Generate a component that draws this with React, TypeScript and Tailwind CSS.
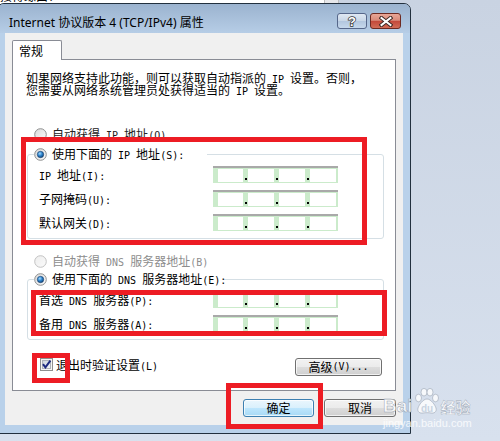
import React from "react";

function L({ children }: { children: React.ReactNode }) {
  return <span className="text-[10px] leading-[0] [font-family:'DejaVu_Sans_Mono',monospace]">{children}</span>;
}

function Radio({ checked = false, disabled = false, id }: { checked?: boolean; disabled?: boolean; id: string }) {
  return (
    <svg width="13" height="13" viewBox="0 0 13 13" className="shrink-0">
      <defs>
        <linearGradient id={`${id}f`} x1="0" y1="0" x2="1" y2="1">
          <stop offset="0" stopColor={disabled ? "#ededed" : "#d9d9d9"} />
          <stop offset="1" stopColor={disabled ? "#fbfbfb" : "#fcfcfc"} />
        </linearGradient>
        <radialGradient id={`${id}d`} cx="0.4" cy="0.35" r="0.75">
          <stop offset="0" stopColor="#a8dcff" />
          <stop offset="0.45" stopColor="#2f86cf" />
          <stop offset="1" stopColor="#0a3566" />
        </radialGradient>
      </defs>
      <circle cx="6.5" cy="6.5" r="5.8" fill={`url(#${id}f)`} stroke={disabled ? "#c2c2c2" : "#8e8f8f"} strokeWidth="1" />
      {checked && <circle cx="6.5" cy="6.5" r="3.2" fill={`url(#${id}d)`} stroke="#1b3f6b" strokeWidth="0.6" />}
    </svg>
  );
}

function Checkbox() {
  return (
    <svg width="13" height="13" viewBox="0 0 13 13" className="shrink-0">
      <defs>
        <linearGradient id="cbg" x1="0" y1="0" x2="1" y2="1">
          <stop offset="0" stopColor="#cbd3dc" />
          <stop offset="1" stopColor="#f4f6f8" />
        </linearGradient>
      </defs>
      <rect x="0.5" y="0.5" width="12" height="12" fill="#f5f5f5" stroke="#8e8f8f" />
      <rect x="2.5" y="2.5" width="8" height="8" fill="url(#cbg)" stroke="#aeb3b9" />
      <path d="M3 6.2 L5.4 9.4 L10.4 2.6" stroke="#1d2a80" strokeWidth="2" fill="none" />
    </svg>
  );
}

function IPField() {
  const seg = [25, 26, 26, 26];
  return (
    <div className="flex h-[17px] w-[125px] border-t-2 border-t-[#a9a9a9] bg-[#cbebcb] pb-px pl-[5px] pr-[2px] pt-px">
      {seg.map((w, i) => (
        <React.Fragment key={i}>
          {i > 0 && (
            <div className="flex w-[5px] items-end justify-center pb-[2px]">
              <div className="h-[2px] w-[2px] bg-black" />
            </div>
          )}
          <div className="bg-white" style={{ width: w }} />
        </React.Fragment>
      ))}
    </div>
  );
}

function Row({ label }: { label: React.ReactNode }) {
  return (
    <div className="flex h-[17px] items-center">
      <div className="w-[185px] whitespace-nowrap pl-[11px] text-[12px] leading-[12px]">{label}</div>
      <IPField />
    </div>
  );
}

const btn =
  "flex h-[18px] items-center justify-center rounded-[3px] border text-[12px] leading-[12px] text-black shadow-[inset_0_0_0_1px_rgba(255,255,255,0.7)]";

export default function App() {
  return (
    <div className="relative h-[441px] w-[500px] overflow-hidden bg-[linear-gradient(#c9d3e2,#d8e1ee)] text-black [font-family:'Noto_Sans_CJK_SC',sans-serif]">
      {/* background window behind */}
      <div className="absolute left-0 top-0 h-[4px] w-[324px] overflow-hidden bg-white">
        <div className="absolute left-0 top-[-10px] whitespace-nowrap text-[12px] leading-[12px]">接得缘由：</div>
      </div>
      <div className="absolute left-[324px] top-0 h-[4px] w-[15px] border-l border-r border-[#bdbdbd] bg-[#e6e7ea]" />

      {/* dialog window */}
      <div className="absolute left-[-3px] top-[3px] flex h-[431px] w-[414px] flex-col rounded-t-[7px] border border-[#22303e] bg-[#b9d1ea]">
        <div className="flex h-[29px] shrink-0 items-start justify-between rounded-t-[6px] bg-[linear-gradient(#9bb3cf,#b6cde6)]">
          <div className="ml-[11px] mt-[10px] h-[17px] whitespace-nowrap text-[12px] leading-[17px] [font-family:'Noto_Sans','Noto_Sans_CJK_SC',sans-serif]">
            Internet 协议版本 4 (TCP/IPv4) 属性
          </div>
          <div className="mr-[9px] mt-[9px] flex gap-[3px]">
            <div className="flex h-[16px] w-[30px] items-center justify-center rounded-[3px] border border-[#56678a] bg-[linear-gradient(#dfe8f3,#c8d6e7_50%,#b2c6de_50%,#c6d8ec)]">
              <svg width="10" height="13" viewBox="0 0 10 13">
                <text x="5" y="11" textAnchor="middle" fontSize="13" fontWeight="bold" fill="white" stroke="#333" strokeWidth="1.5" paintOrder="stroke" fontFamily="Liberation Sans">?</text>
              </svg>
            </div>
            <div className="flex h-[16px] w-[31px] items-center justify-center rounded-[3px] border border-[#6d2a22] bg-[linear-gradient(#e9a797,#d98b7b_45%,#c4493a_52%,#d16c57)]">
              <svg width="14" height="11" viewBox="0 0 14 11">
                <path d="M2.5 2 L11.5 9 M11.5 2 L2.5 9" stroke="#3a2622" strokeWidth="4" strokeLinecap="square" />
                <path d="M2.5 2 L11.5 9 M11.5 2 L2.5 9" stroke="white" strokeWidth="2" strokeLinecap="square" />
              </svg>
            </div>
          </div>
        </div>

        <div className="mx-[7px] mb-[8px] flex flex-1 flex-col bg-[#f0f0f0] pl-[7px] pt-[7px]">
          <div className="relative z-10 -mb-px flex h-[20px] w-[50px] items-center rounded-t-[2px] border border-b-0 border-[#898c95] bg-white pl-[6px] text-[12px] leading-[12px]">
            常规
          </div>
          <div className="flex h-[332px] w-[384px] shrink-0 flex-col border border-[#898c95] bg-white">
            <div className="ml-[13px] mt-[12px] flex flex-col whitespace-nowrap text-[12px] leading-[12px]">
              <div className="h-[12px]">
                如果网络支持此功能，则可以获取自动指派的<L> IP </L>设置。否则，
              </div>
              <div className="h-[12px]">
                您需要从网络系统管理员处获得适当的<L> IP </L>设置。
              </div>
            </div>

            <div className="ml-[21px] mt-[30px] flex h-[16px] items-center gap-[5px] text-[12px] leading-[12px]">
              <Radio id="ra" />
              <span className="text-[#222]">自动获得<L> IP </L>地址<L>(O)</L></span>
            </div>

            <fieldset className="ml-[14px] mt-[4px] w-[357px] rounded-[3px] border border-[#d5dfe5] pb-[7px]">
              <legend className="ml-[6px] flex h-[16px] w-[173px] items-center gap-[5px] bg-white text-[12px] leading-[12px]">
                <Radio id="rb" checked />
                <span className="whitespace-nowrap">使用下面的<L> IP </L>地址<L>(S):</L></span>
              </legend>
              <div className="mt-[4px] flex flex-col gap-[7px]">
                <Row label={<><L>IP </L>地址<L>(I):</L></>} />
                <Row label={<>子网掩码<L>(U):</L></>} />
                <Row label={<>默认网关<L>(D):</L></>} />
              </div>
            </fieldset>

            <div className="ml-[21px] mt-[14px] flex h-[16px] items-center gap-[5px] text-[12px] leading-[12px]">
              <Radio id="rc" disabled />
              <span className="text-[#8d8d8d]">自动获得<L> DNS </L>服务器地址<L>(B)</L></span>
            </div>

            <fieldset className="ml-[14px] mt-[2px] w-[357px] rounded-[3px] border border-[#d5dfe5] pb-[7px]">
              <legend className="ml-[6px] flex h-[16px] w-[190px] items-center gap-[5px] bg-white text-[12px] leading-[12px]">
                <Radio id="rd" checked />
                <span className="whitespace-nowrap">使用下面的<L> DNS </L>服务器地址<L>(E):</L></span>
              </legend>
              <div className="mt-[4px] flex flex-col gap-[7px]">
                <Row label={<>首选<L> DNS </L>服务器<L>(P):</L></>} />
                <Row label={<>备用<L> DNS </L>服务器<L>(A):</L></>} />
              </div>
            </fieldset>

            <div className="ml-[27px] mr-[13px] mt-[18px] flex items-start justify-between">
              <div className="flex h-[13px] items-center gap-[3px] text-[12px] leading-[12px]">
                <Checkbox />
                <span className="whitespace-nowrap">退出时验证设置<L>(L)</L></span>
              </div>
              <div className={`${btn} w-[87px] border-[#707070] bg-[linear-gradient(#f2f2f2,#ebebeb_50%,#dddddd_50%,#cfcfcf)]`}>
                高级<L>(V)...</L>
              </div>
            </div>
          </div>

          <div className="mt-[8px] flex justify-end gap-[10px] pr-[7px]">
            <div className={`${btn} w-[71px] border-[#3c7fb1] bg-[linear-gradient(#eaf6fd,#d9f0fc_50%,#bee6fd_50%,#a7d9f5)]`}>
              确定
            </div>
            <div className={`${btn} w-[72px] border-[#707070] bg-[linear-gradient(#f2f2f2,#ebebeb_50%,#dddddd_50%,#cfcfcf)]`}>
              取消
            </div>
          </div>
        </div>
      </div>

      {/* red annotation boxes */}
      <div className="pointer-events-none absolute left-[21px] top-[137px] h-[108px] w-[346px] border-[5px] border-[#ed1c24]" />
      <div className="pointer-events-none absolute left-[31px] top-[290px] h-[46px] w-[356px] border-[5px] border-[#ed1c24]" />
      <div className="pointer-events-none absolute left-[32px] top-[353px] h-[30px] w-[38px] border-[5px] border-[#ed1c24]" />
      <div className="pointer-events-none absolute left-[226px] top-[383px] h-[46px] w-[97px] border-[5px] border-[#ed1c24]" />

      {/* watermark */}
      <div className="pointer-events-none absolute left-[383px] top-[388px] flex flex-col items-start">
        <div className="flex items-end">
          <span className="text-[19px] font-bold leading-[17px] text-white/80 [-webkit-text-stroke:0.5px_#98a3b1] [font-family:'Liberation_Sans',sans-serif]">
            Bai
          </span>
          <svg width="24" height="26" viewBox="0 0 24 26" className="ml-[2px]">
            <g fill="white" fillOpacity="0.8" stroke="#98a3b1" strokeWidth="0.6">
              <ellipse cx="3.5" cy="10" rx="3" ry="3.8" />
              <ellipse cx="9" cy="4.2" rx="3" ry="3.8" />
              <ellipse cx="15" cy="4.2" rx="3" ry="3.8" />
              <ellipse cx="20.5" cy="10" rx="3" ry="3.8" />
              <path d="M12 11 C8 11 4 17 3 20 C2 24 5 25.5 8 25 C10 24.6 14 24.6 16 25 C19 25.5 22 24 21 20 C20 17 16 11 12 11 Z" />
            </g>
            <text x="12" y="23.5" textAnchor="middle" fontSize="10" fontWeight="bold" fill="#c9d4e2" fontFamily="Liberation Sans">du</text>
          </svg>
          <span className="ml-[2px] text-[15px] font-bold leading-[15px] text-white/80 [-webkit-text-stroke:0.4px_#98a3b1]">
            经验
          </span>
        </div>
        <div className="mt-[4px] text-[11px] leading-[11px] text-white/80 [font-family:'Liberation_Sans',sans-serif]">
          jingyan.baidu.com
        </div>
      </div>
    </div>
  );
}
